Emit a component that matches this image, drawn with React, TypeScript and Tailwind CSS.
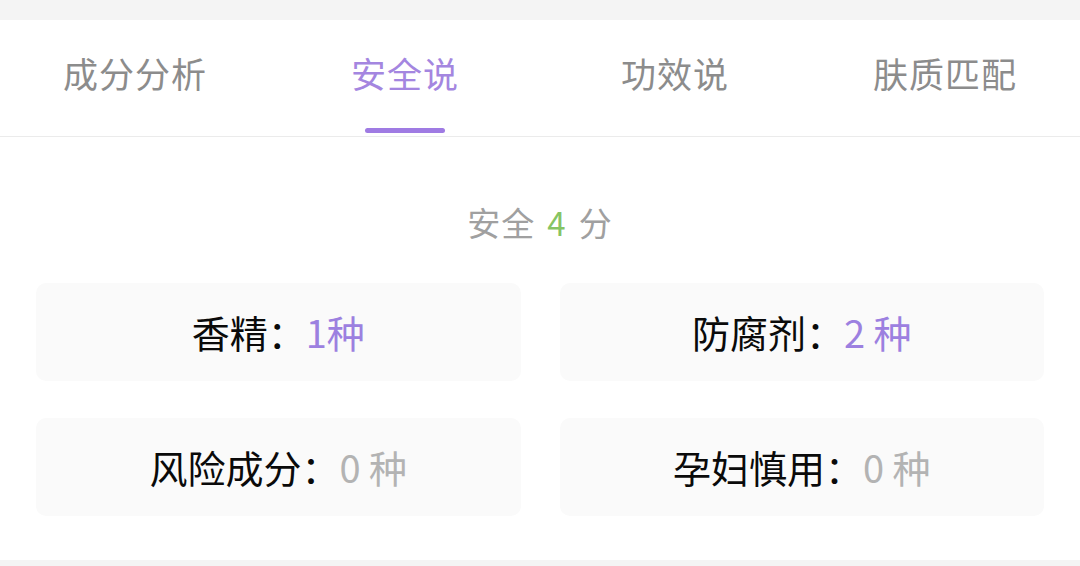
import React from "react";

const tabs = ["成分分析", "安全说", "功效说", "肤质匹配"];

const stats = [
  { label: "香精", value: "1种", tone: "purple" },
  { label: "防腐剂", value: "2 种", tone: "purple" },
  { label: "风险成分", value: "0 种", tone: "gray" },
  { label: "孕妇慎用", value: "0 种", tone: "gray" },
];

export default function App() {
  const active = 1;

  return (
    <div
      className="w-[1080px] h-[566px] bg-white overflow-hidden flex flex-col"
      style={{ fontFamily: '"Noto Sans CJK SC", "Noto Sans", sans-serif' }}
    >
      <div className="h-[20px] bg-[#f4f4f4]" />

      {/* Tabs */}
      <div className="grid grid-cols-4 h-[117px] border-b border-[#ebebeb]">
        {tabs.map((t, i) => (
          <div key={t} className="flex flex-col items-center">
            <span
              className={`mt-[33px] text-[35px] leading-[40px] tracking-[1px] ${
                i === active ? "text-[#a486e0]" : "text-[#8c8c8c]"
              }`}
            >
              {t}
            </span>
            {i === active && (
              <div className="mt-auto mb-[3px] w-[80px] h-[5px] rounded-full bg-[#9f7be3]" />
            )}
          </div>
        ))}
      </div>

      {/* Score */}
      <div className="mt-[64px] flex justify-center text-[33px] leading-[42px] text-[#a0a0a0] tracking-[1px]">
        <span>安全</span>
        <span className="mx-[12px] text-[#86c463]">4</span>
        <span>分</span>
      </div>

      {/* Stats */}
      <div className="grid grid-cols-2 gap-x-[39px] gap-y-[37px] px-[36px] mt-[40px]">
        {stats.map((s) => (
          <div
            key={s.label}
            className="h-[98px] rounded-[10px] bg-[#fafafa] flex items-center justify-center text-[38px] leading-none"
          >
            <span className="text-[#0a0a0a]">{s.label}：</span>
            <span
              className={
                s.tone === "purple" ? "text-[#9c80e0]" : "text-[#b3b3b3]"
              }
            >
              {s.value}
            </span>
          </div>
        ))}
      </div>

      <div className="mt-auto h-[6px] bg-[#f4f4f4]" />
    </div>
  );
}
